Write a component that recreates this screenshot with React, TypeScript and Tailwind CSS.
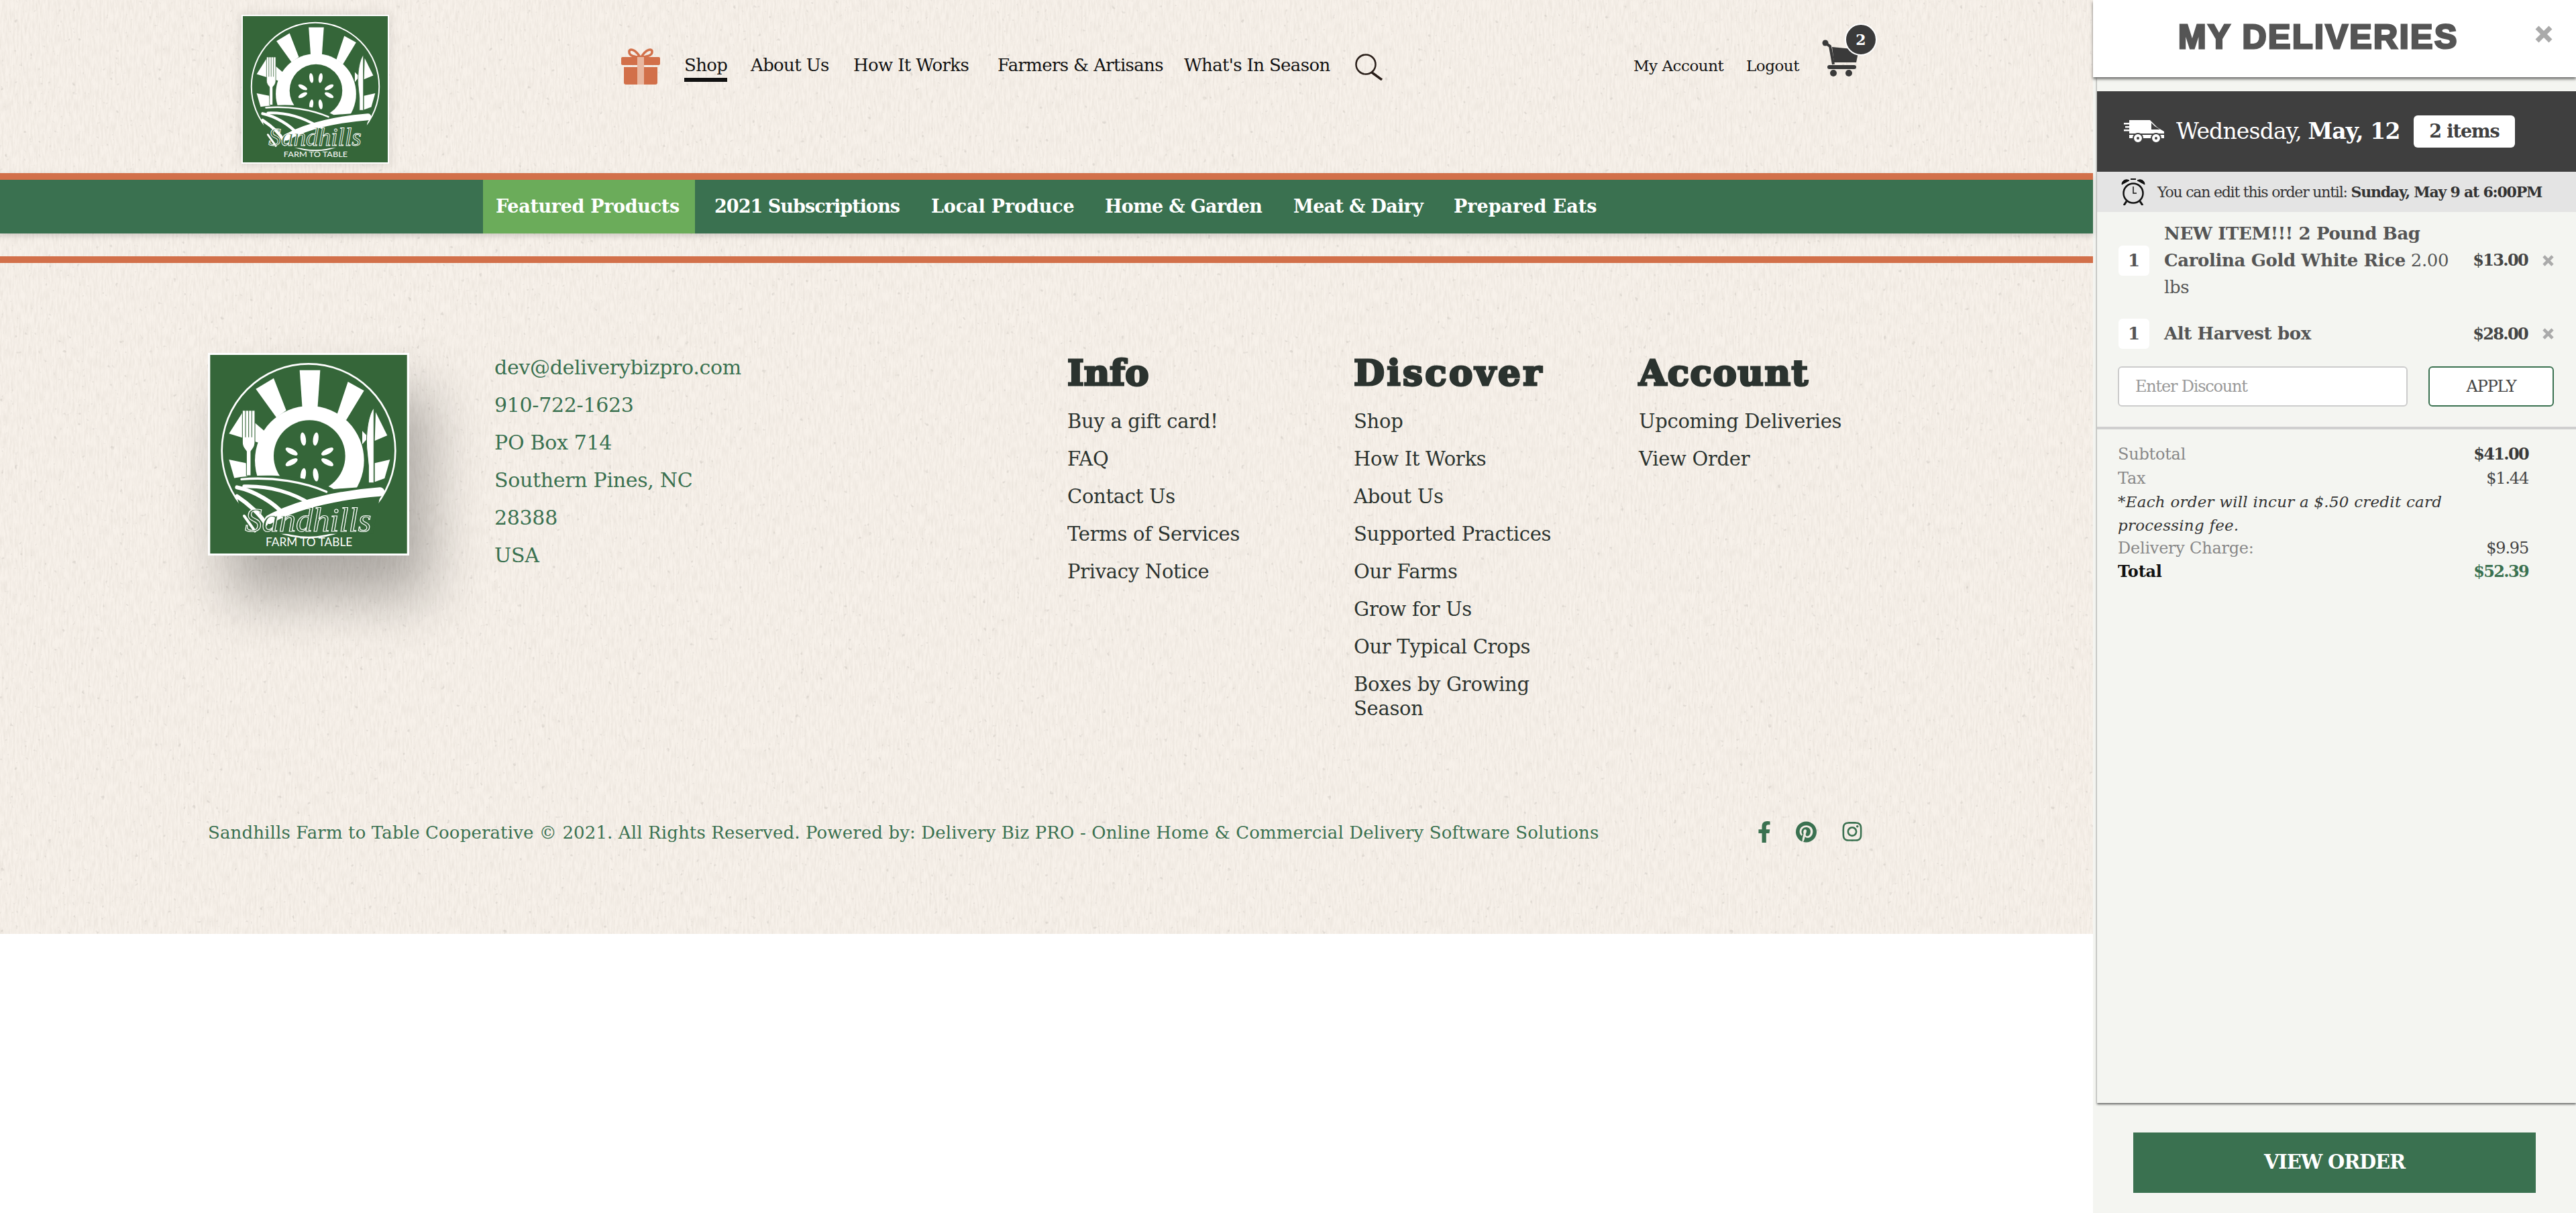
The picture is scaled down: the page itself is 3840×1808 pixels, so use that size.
import { FaFacebookF, FaInstagram, FaPinterest } from "react-icons/fa";

const topLinks = [
  { label: "Shop", w: "w-[64px]", active: true },
  { label: "About Us", w: "w-[116px]" },
  { label: "How It Works", w: "w-[178px]" },
  { label: "Farmers & Artisans", w: "w-[241px]" },
  { label: "What's In Season", w: "w-[218px]" },
];

const categories = [
  { label: "2021 Subscriptions", w: "w-[275px] tracking-[-0.035em]" },
  { label: "Local Produce", w: "w-[211px] tracking-[-0.005em]" },
  { label: "Home & Garden", w: "w-[233px]" },
  { label: "Meat & Dairy", w: "w-[191px]" },
  { label: "Prepared Eats", w: "w-[212px] tracking-[0]" },
];

const contact = ["dev@deliverybizpro.com", "910-722-1623", "PO Box 714", "Southern Pines, NC", "28388", "USA"];
const info = ["Buy a gift card!", "FAQ", "Contact Us", "Terms of Services", "Privacy Notice"];
const discover = ["Shop", "How It Works", "About Us", "Supported Practices", "Our Farms", "Grow for Us", "Our Typical Crops"];
const account = ["Upcoming Deliveries", "View Order"];

function Logo() {
  return (
    <svg viewBox="0 0 220 222" className="block h-full w-full">
      <rect width="220" height="222" fill="#356639" />
      <circle cx="110" cy="107" r="97" fill="none" stroke="#fff" strokeWidth="2" />
      <g fill="#fff">
        <polygon points="100,17 123,17 120,60 103,60" />
        <polygon points="51,38 71,26 85,62 74,70" />
        <polygon points="172,40 154,30 142,66 152,73" />
        <polygon points="37,63 21,88 60,100 64,88 50,76" />
        <polygon points="185,64 198,90 184,96" />
        <polygon points="170,85 177,92 170,100" />
        <polygon points="21,117 40,121 42,138 27,138" />
        <polygon points="184,121 201,117 195,138 184,142" />
        <circle cx="111" cy="118" r="61" />
      </g>
      <circle cx="111" cy="113" r="40" fill="#356639" />
      <g fill="#fff">
        <ellipse cx="104" cy="94" rx="3" ry="7.500" transform="rotate(-8 104 94)" />
        <ellipse cx="118" cy="94" rx="3" ry="7.500" transform="rotate(8 118 94)" />
        <ellipse cx="91" cy="108" rx="3" ry="7.500" transform="rotate(-62 91 108)" />
        <ellipse cx="131" cy="108" rx="3" ry="7.500" transform="rotate(62 131 108)" />
        <ellipse cx="91" cy="120" rx="3" ry="7.500" transform="rotate(62 91 120)" />
        <ellipse cx="131" cy="120" rx="3" ry="7.500" transform="rotate(-62 131 120)" />
        <ellipse cx="104" cy="134" rx="3" ry="7.500" transform="rotate(8 104 134)" />
        <ellipse cx="118" cy="134" rx="3" ry="7.500" transform="rotate(-8 118 134)" />
      </g>
      <path d="M25 138 C60 132 110 134 138 150 L192 146 L182 200 L40 200 Z" fill="#356639" />
      <g fill="none" stroke="#fff" strokeLinecap="round">
        <path d="M35 139 C70 136 105 142 130 153" strokeWidth="2.500" />
        <path d="M38 147 C70 146 95 156 113 167" strokeWidth="4" />
        <path d="M30 148 C50 152 72 166 82 178" strokeWidth="4.500" />
        <path d="M30 158 C42 166 56 178 62 189" strokeWidth="4.500" />
        <path d="M38 180 L50 197" strokeWidth="3" />
        <path d="M66 184 C100 165 150 156 190 153" strokeWidth="10" />
      </g>
      <g fill="#fff" stroke="#356639" strokeWidth="0.800">
        <path d="M36 62 H50 V98 C50 104 46 106 45.500 108 V135 H40.500 V108 C40 106 36 104 36 98 Z" />
        <path d="M39.500 62 V92 M43 62 V92 M46.500 62 V92" fill="none" />
        <path d="M183 59 C177 66 174 86 175 104 L177 124 V143 H183 Z" />
      </g>
      <text x="39" y="197" textLength="141" lengthAdjust="spacingAndGlyphs" fontFamily="'Liberation Serif', serif" fontStyle="italic" fontSize="38" fill="#356639" stroke="#fff" strokeWidth="0.900">Sandhills</text>
      <text x="62" y="214" textLength="97" lengthAdjust="spacingAndGlyphs" fontFamily="Lato, sans-serif" fontSize="12.500" fill="#fff">FARM TO TABLE</text>
    </svg>
  );
}

function GiftIcon() {
  return (
    <svg viewBox="0 0 60 56" className="h-[56px] w-[60px]" fill="#d2704a">
      <path d="M29 14 C22 2 12 0 13 7 C13 12 21 14 29 14 C37 14 47 12 47 7 C48 0 38 2 31 14" fill="none" stroke="#d2704a" strokeWidth="3.500" />
      <rect x="1" y="14" width="58" height="12" rx="2" />
      <path d="M5 29 H25 V55 H8 Q5 55 5 52 Z" />
      <path d="M35 29 H55 V52 Q55 55 52 55 H35 Z" />
      <rect x="25" y="26" width="10" height="29" fill="#e8b7a0" />
      <rect x="25" y="14" width="10" height="12" fill="#e8b7a0" />
    </svg>
  );
}

function SearchIcon() {
  return (
    <svg viewBox="0 0 42 40" className="h-[40px] w-[42px]" fill="none" stroke="#2a1f1a">
      <circle cx="16" cy="16" r="14.500" strokeWidth="2.500" />
      <path d="M25 28 L40 39" strokeWidth="3.500" />
    </svg>
  );
}

function CartIcon() {
  return (
    <svg viewBox="0 0 60 56" className="h-[56px] w-[60px]" fill="#3a3a3a">
      <circle cx="8" cy="5" r="4.500" />
      <path d="M8 5 L15 10 L20 37" fill="none" stroke="#3a3a3a" strokeWidth="4" />
      <path d="M18 11 L58 15 L54 34 L21 34 Z" />
      <rect x="11" y="38" width="43" height="6" rx="3" />
      <circle cx="20" cy="50" r="5" />
      <circle cx="43" cy="50" r="5" />
    </svg>
  );
}

function TruckIcon() {
  return (
    <svg viewBox="0 0 60 34" className="h-[34px] w-[60px]" fill="#fff">
      <rect x="0" y="4" width="14" height="2.500" />
      <rect x="2" y="9" width="12" height="2.500" />
      <rect x="0" y="14" width="14" height="2.500" />
      <path d="M8 0 H39 L50 11 L60 17 V27 H8 Z" />
      <path d="M41 4 V14 H54 L46 9 Z" fill="#3f3f3f" />
      <rect x="0" y="20" width="60" height="2" fill="#3f3f3f" />
      <circle cx="21" cy="27" r="7" fill="#fff" stroke="#3f3f3f" strokeWidth="2" />
      <circle cx="48" cy="27" r="7" fill="#fff" stroke="#3f3f3f" strokeWidth="2" />
      <circle cx="21" cy="27" r="2" fill="#3f3f3f" />
      <circle cx="48" cy="27" r="2" fill="#3f3f3f" />
    </svg>
  );
}

function AlarmIcon() {
  return (
    <svg viewBox="0 0 38 40" className="h-[40px] w-[38px]" fill="none" stroke="#111">
      <circle cx="19" cy="22" r="14.500" strokeWidth="2.500" />
      <path d="M19 12 V22 H24" strokeWidth="1.500" />
      <path d="M2 9 C2 3 8 0 13 3 Z" fill="#111" strokeWidth="1" />
      <path d="M36 9 C36 3 30 0 25 3 Z" fill="#111" strokeWidth="1" />
      <path d="M15 1 H23" strokeWidth="2" />
      <path d="M9 34 L5 40 M29 34 L33 40" strokeWidth="3" />
    </svg>
  );
}

function CloseMark({ size }: { size: string }) {
  return (
    <svg viewBox="0 0 26 26" className={size} fill="none" stroke="#aaa" strokeWidth="7">
      <path d="M3 3 L23 23 M23 3 L3 23" />
    </svg>
  );
}

function FooterColumn({ title, links, w, titleTracking, children }: { title: string; links: string[]; w: string; titleTracking: string; children?: React.ReactNode }) {
  return (
    <div className={w}>
      <h3 className={`${titleTracking} h-[80px] text-[53px] leading-[70px] font-bold text-[#2b332f] [-webkit-text-stroke:3px_#2b332f]`}>{title}</h3>
      <ul className="text-[29px] leading-[36px] tracking-[-0.01em] text-[#2b332f]">
        {links.map((l) => (
          <li key={l} className="py-[10px] whitespace-nowrap">{l}</li>
        ))}
        {children}
      </ul>
    </div>
  );
}

export default function App() {
  return (
    <div className="flex h-screen w-full overflow-hidden bg-white font-['DejaVu_Serif',serif]">
      <main className="relative h-[1392px] w-[3120px] shrink-0 bg-[#f7f1ea]">
        <svg className="absolute inset-0 h-full w-full" aria-hidden="true">
          <filter id="paper">
            <feTurbulence type="fractalNoise" baseFrequency="0.35 0.06" numOctaves="3" seed="4" />
            <feColorMatrix values="0 0 0 0 0.45  0 0 0 0 0.4  0 0 0 0 0.34  0 0 0 0.3 -0.1" />
          </filter>
          <filter id="specks">
            <feTurbulence type="fractalNoise" baseFrequency="0.14" numOctaves="2" seed="9" />
            <feColorMatrix values="0 0 0 0 0.5  0 0 0 0 0.47  0 0 0 0 0.43  0 0 0 7 -5" />
          </filter>
          <rect width="100%" height="100%" filter="url(#paper)" />
          <rect width="100%" height="100%" filter="url(#specks)" opacity="0.35" />
        </svg>

        <div className="relative flex h-full flex-col">
          <header className="flex h-[258px] shrink-0 items-start pt-[22px] pl-[360px]">
            <div className="h-[222px] w-[220px] shrink-0 border-[2px] border-white shadow-[0_0_16px_rgba(0,0,0,0.12)]">
              <Logo />
            </div>
            <div className="mt-[49px] ml-[345px]">
              <GiftIcon />
            </div>
            <nav className="mt-[57px] ml-[35px] flex gap-[37px] text-[26px] leading-[36px] tracking-[-0.025em] text-[#111]">
              {topLinks.map((l) => (
                <a key={l.label} className={`${l.w} block h-[43px] whitespace-nowrap ${l.active ? "mr-[-2px] border-b-[6px] border-[#111]" : ""}`}>
                  {l.label}
                </a>
              ))}
            </nav>
            <div className="mt-[58px] ml-[37px]">
              <SearchIcon />
            </div>
            <div className="mt-[58px] ml-[373px] flex gap-[36px] text-[23px] leading-[36px] tracking-[-0.02em] text-[#111]">
              <a className="w-[132px] whitespace-nowrap">My Account</a>
              <a className="w-[75px] whitespace-nowrap">Logout</a>
            </div>
            <div className="relative mt-[37px] ml-[35px]">
              <CartIcon />
              <span className="absolute -top-[24px] left-[37px] flex h-[48px] w-[48px] items-center justify-center rounded-full border-[2px] border-white bg-[#3a3a3a] text-[22px] font-bold text-white">2</span>
            </div>
          </header>

          <div className="shrink-0 border-t-[10px] border-[#d2704a] bg-[#3a7150] shadow-[0_4px_8px_rgba(0,0,0,0.15)]">
            <nav className="flex h-[80px] items-stretch gap-[10px] pl-[720px] text-[27px] font-bold tracking-[-0.025em] text-white">
              <a className="flex items-center bg-[#6bac5a] px-[19px] tracking-[-0.012em] whitespace-nowrap">
                <span className="w-[278px]">Featured Products</span>
              </a>
              {categories.map((c) => (
                <a key={c.label} className={`${c.w} mx-[19px] flex items-center whitespace-nowrap`}>
                  {c.label}
                </a>
              ))}
            </nav>
          </div>

          <div className="mt-[34px] h-[10px] shrink-0 bg-[#d2704a]" />

          <footer className="flex flex-1 flex-col pt-[128px] pl-[310px]">
            <div className="flex items-start">
              <div className="mt-[6px] h-[302px] w-[300px] shrink-0 border-[3px] border-white shadow-[30px_60px_80px_rgba(0,0,0,0.3)]">
                <Logo />
              </div>
              <ul className="ml-[127px] w-[854px] shrink-0 text-[30px] leading-[56px] tracking-[-0.01em] text-[#3a7150]">
                {contact.map((c) => (
                  <li key={c} className="whitespace-nowrap">{c}</li>
                ))}
              </ul>
              <FooterColumn title="Info" links={info} w="w-[427px] shrink-0" titleTracking="tracking-[0]" />
              <FooterColumn title="Discover" links={discover} w="w-[425px] shrink-0" titleTracking="tracking-[0.065em]">
                <li className="py-[10px] whitespace-nowrap">
                  Boxes by Growing
                  <br />
                  Season
                </li>
              </FooterColumn>
              <FooterColumn title="Account" links={account} w="w-[340px] shrink-0" titleTracking="tracking-[0.03em]" />
            </div>

            <div className="mt-auto mb-[131px] flex h-[40px] items-center">
              <p className="w-[2310px] shrink-0 text-[26px] tracking-[0.005em] whitespace-nowrap text-[#3a7150]">
                Sandhills Farm to Table Cooperative © 2021. All Rights Reserved. Powered by: Delivery Biz PRO - Online Home &amp; Commercial Delivery Software Solutions
              </p>
              <div className="mb-[3px] flex items-center gap-[36px] text-[#3a7150]">
                <FaFacebookF className="h-[34px] w-[20px]" />
                <FaPinterest className="h-[32px] w-[33px]" />
                <FaInstagram className="h-[33px] w-[32px]" />
              </div>
            </div>
          </footer>
        </div>
      </main>

      <aside className="flex h-screen w-[720px] shrink-0 flex-col bg-[#f4f5f1]">
        <div className="relative z-10 flex h-[115px] shrink-0 items-start bg-white pt-[29px] shadow-[0_3px_4px_rgba(0,0,0,0.55)]">
          <h2 className="ml-[127px] w-[415px] font-['Liberation_Sans',sans-serif] text-[50px] leading-[52px] font-bold tracking-[0.05em] whitespace-nowrap text-[#555] [-webkit-text-stroke:3px_#555]">MY DELIVERIES</h2>
          <button className="mt-[9px] ml-[117px]">
            <CloseMark size="h-[26px] w-[26px]" />
          </button>
        </div>

        <div className="ml-[6px] flex flex-1 flex-col pt-[21px] shadow-[0_2px_3px_rgba(0,0,0,0.6)]">
          <div className="flex h-[120px] shrink-0 items-center bg-[#3f3f3f] pl-[40px] text-white">
            <TruckIcon />
            <span className="ml-[18px] w-[336px] text-[33px] tracking-[-0.025em] whitespace-nowrap">
              Wednesday, <b>May, 12</b>
            </span>
            <span className="ml-[18px] flex h-[48px] w-[151px] items-center justify-center rounded-[6px] bg-white text-[27px] font-bold tracking-[-0.04em] text-[#3f3f3f]">2 items</span>
          </div>

          <div className="flex h-[60px] shrink-0 items-center bg-[#e4e4e4] pl-[35px] text-[#333]">
            <AlarmIcon />
            <span className="ml-[17px] text-[22px] tracking-[-0.055em] whitespace-nowrap">
              You can edit this order until: <b>Sunday, May 9 at 6:00PM</b>
            </span>
          </div>

          <div className="mt-[12px] flex items-center pl-[32px] text-[#555]">
            <span className="flex h-[45px] w-[46px] shrink-0 items-center justify-center rounded-[6px] bg-white text-[26px] font-bold">1</span>
            <p className="ml-[22px] w-[448px] shrink-0 text-[26px] leading-[40px] tracking-[-0.015em] whitespace-nowrap">
              <b>NEW ITEM!!! 2 Pound Bag</b>
              <br />
              <b>Carolina Gold White Rice</b> 2.00
              <br />
              lbs
            </p>
            <span className="w-[94px] text-right text-[24px] font-bold tracking-[-0.07em] text-[#444]">$13.00</span>
            <span className="ml-[22px]">
              <CloseMark size="h-[17px] w-[17px]" />
            </span>
          </div>

          <div className="mt-[27px] flex items-center pl-[32px] text-[#555]">
            <span className="flex h-[45px] w-[46px] shrink-0 items-center justify-center rounded-[6px] bg-white text-[26px] font-bold">1</span>
            <p className="ml-[22px] w-[448px] shrink-0 text-[26px] font-bold tracking-[-0.015em] whitespace-nowrap">Alt Harvest box</p>
            <span className="w-[94px] text-right text-[24px] font-bold tracking-[-0.07em] text-[#444]">$28.00</span>
            <span className="ml-[22px]">
              <CloseMark size="h-[17px] w-[17px]" />
            </span>
          </div>

          <div className="mt-[26px] flex gap-[31px] pl-[31px]">
            <input
              placeholder="Enter Discount"
              className="h-[60px] w-[432px] rounded-[6px] border-[2px] border-[#ccc] bg-white pl-[24px] text-[24px] tracking-[-0.05em] placeholder:text-[#999]"
            />
            <button className="h-[60px] w-[187px] rounded-[6px] border-[2px] border-[#3a7150] bg-white text-[24px] tracking-[-0.05em] text-[#444]">APPLY</button>
          </div>

          <div className="mt-[30px] h-[4px] shrink-0 bg-[#cfcfcf]" />

          <div className="w-[643px] pt-[19px] pl-[31px] text-[24px] tracking-[-0.01em]">
            <div className="flex h-[36px] items-center justify-between text-[#888]">
              <span>Subtotal</span>
              <b className="tracking-[-0.07em] text-[#3a3a3a]">$41.00</b>
            </div>
            <div className="flex h-[36px] items-center justify-between text-[#888]">
              <span>Tax</span>
              <span className="tracking-[-0.05em] text-[#444]">$1.44</span>
            </div>
            <p className="w-[520px] text-[23px] leading-[35px] tracking-[0.01em] whitespace-nowrap text-[#333] italic">
              *Each order will incur a $.50 credit card
              <br />
              processing fee.
            </p>
            <div className="flex h-[32px] items-center justify-between text-[#888]">
              <span>Delivery Charge:</span>
              <span className="tracking-[-0.05em] text-[#444]">$9.95</span>
            </div>
            <div className="flex h-[37px] items-center justify-between font-bold text-[#111]">
              <span>Total</span>
              <span className="tracking-[-0.07em] text-[#3a7150]">$52.39</span>
            </div>
          </div>
        </div>

        <div className="h-[164px] shrink-0 pt-[44px] pl-[60px]">
          <button className="h-[90px] w-[600px] bg-[#3a7150] text-[29px] font-bold tracking-[-0.04em] text-white">VIEW ORDER</button>
        </div>
      </aside>
    </div>
  );
}
